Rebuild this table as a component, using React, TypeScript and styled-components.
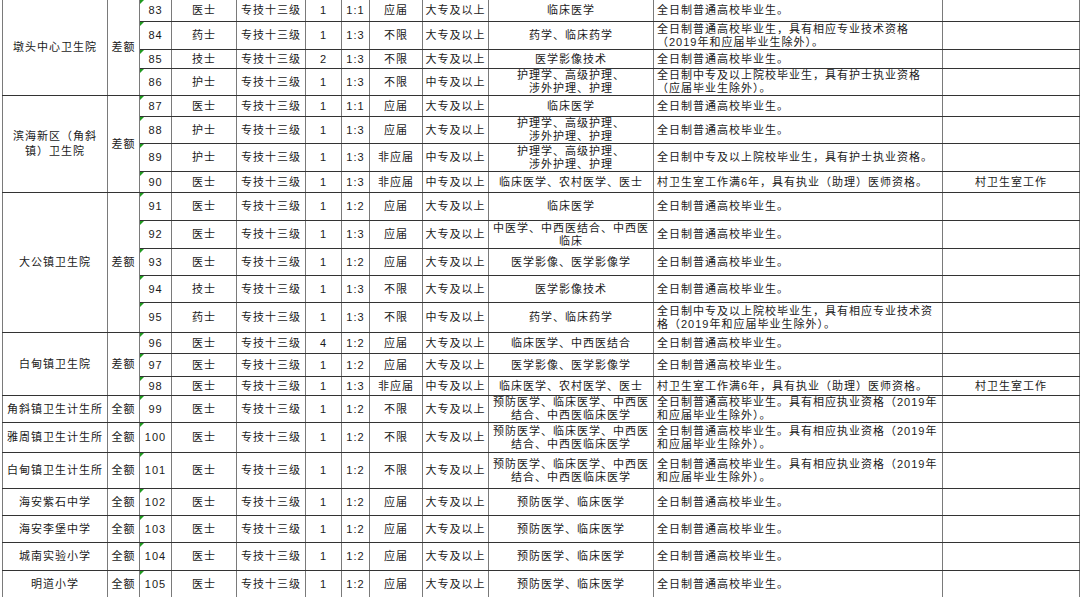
import React from 'react';
import styled, { createGlobalStyle } from 'styled-components';

const Global = createGlobalStyle`
  html, body { margin: 0; padding: 0; background: #fff; }
`;

type Row = {
  no: number;
  post: string;
  count: number;
  ratio: string;
  fresh: string;
  edu: string;
  major: string[];
  req: string[];
  note?: string;
  h: number;
};

type Group = { unit: string[]; type: string; rows: Row[] };

const G = ['全日制普通高校毕业生。'];
const CUNWEI = ['村卫生室工作满6年，具有执业（助理）医师资格。'];
const NURSE = ['护理学、高级护理、', '涉外护理、护理'];
const PREV3 = ['预防医学、临床医学、中西医', '结合、中西医临床医学'];
const REQ3 = ['全日制普通高校毕业生。具有相应执业资格（2019年', '和应届毕业生除外）。'];

const r = (
  no: number, post: string, count: number, ratio: string, fresh: string, edu: string,
  major: string[], req: string[], h: number, note?: string
): Row => ({ no, post, count, ratio, fresh, edu, major, req, h, note });

const groups: Group[] = [
  {
    unit: ['墩头中心卫生院'], type: '差额', rows: [
      r(83, '医士', 1, '1:1', '应届', '大专及以上', ['临床医学'], G, 22),
      r(84, '药士', 1, '1:3', '不限', '大专及以上', ['药学、临床药学'], ['全日制普通高校毕业生，具有相应专业技术资格', '（2019年和应届毕业生除外）。'], 28),
      r(85, '技士', 2, '1:3', '不限', '大专及以上', ['医学影像技术'], G, 19),
      r(86, '护士', 1, '1:3', '不限', '中专及以上', NURSE, ['全日制中专及以上院校毕业生，具有护士执业资格', '（应届毕业生除外）。'], 27),
    ],
  },
  {
    unit: ['滨海新区（角斜', '镇）卫生院'], type: '差额', rows: [
      r(87, '医士', 1, '1:1', '应届', '大专及以上', ['临床医学'], G, 21),
      r(88, '护士', 1, '1:3', '应届', '大专及以上', NURSE, G, 27),
      r(89, '护士', 1, '1:3', '非应届', '中专及以上', NURSE, ['全日制中专及以上院校毕业生，具有护士执业资格。'], 28),
      r(90, '医士', 1, '1:3', '非应届', '中专及以上', ['临床医学、农村医学、医士'], CUNWEI, 21, '村卫生室工作'),
    ],
  },
  {
    unit: ['大公镇卫生院'], type: '差额', rows: [
      r(91, '医士', 1, '1:2', '应届', '大专及以上', ['临床医学'], G, 28),
      r(92, '医士', 1, '1:3', '应届', '大专及以上', ['中医学、中西医结合、中西医', '临床'], G, 28),
      r(93, '医士', 1, '1:2', '应届', '大专及以上', ['医学影像、医学影像学'], G, 27),
      r(94, '技士', 1, '1:3', '不限', '大专及以上', ['医学影像技术'], G, 27),
      r(95, '药士', 1, '1:3', '不限', '中专及以上', ['药学、临床药学'], ['全日制中专及以上院校毕业生，具有相应专业技术资', '格（2019年和应届毕业生除外）。'], 30),
    ],
  },
  {
    unit: ['白甸镇卫生院'], type: '差额', rows: [
      r(96, '医士', 4, '1:2', '应届', '大专及以上', ['临床医学、中西医结合'], G, 21),
      r(97, '医士', 1, '1:2', '应届', '大专及以上', ['医学影像、医学影像学'], G, 23),
      r(98, '医士', 1, '1:3', '非应届', '中专及以上', ['临床医学、农村医学、医士'], CUNWEI, 19, '村卫生室工作'),
    ],
  },
  { unit: ['角斜镇卫生计生所'], type: '全额', rows: [r(99, '医士', 1, '1:2', '不限', '大专及以上', PREV3, REQ3, 27)] },
  { unit: ['雅周镇卫生计生所'], type: '全额', rows: [r(100, '医士', 1, '1:2', '不限', '大专及以上', PREV3, REQ3, 30)] },
  { unit: ['白甸镇卫生计生所'], type: '全额', rows: [r(101, '医士', 1, '1:2', '不限', '大专及以上', PREV3, REQ3, 36)] },
  { unit: ['海安紫石中学'], type: '全额', rows: [r(102, '医士', 1, '1:2', '应届', '大专及以上', ['预防医学、临床医学'], G, 27)] },
  { unit: ['海安李堡中学'], type: '全额', rows: [r(103, '医士', 1, '1:2', '应届', '大专及以上', ['预防医学、临床医学'], G, 27)] },
  { unit: ['城南实验小学'], type: '全额', rows: [r(104, '医士', 1, '1:2', '应届', '大专及以上', ['预防医学、临床医学'], G, 28)] },
  { unit: ['明道小学'], type: '全额', rows: [r(105, '医士', 1, '1:2', '应届', '大专及以上', ['预防医学、临床医学'], G, 27)] },
];

const colWidths = [105, 32, 32, 65, 69, 36, 28, 53, 66, 165, 289, 137];

const Sheet = styled.div`
  width: 1080px;
  height: 597px;
  overflow: hidden;
  padding-left: 2px;
  box-sizing: border-box;
  background: #fff;
`;

const Table = styled.table`
  table-layout: fixed;
  border-collapse: collapse;
  width: 1077px;
  margin-top: -1px;
  font-family: "Liberation Sans", "Noto Sans CJK SC", sans-serif;
  font-size: 11px;
  letter-spacing: 1px;
  color: #1a1a1a;
`;

const Tr = styled.tr<{ $h: number }>`
  height: ${(p) => p.$h}px;
`;

const Td = styled.td<{ $align?: 'left' | 'center'; $dark?: boolean; $lh?: number }>`
  position: relative;
  padding: 0 ${(p) => (p.$align === 'left' ? '0 0 3px' : '0')};
  text-align: ${(p) => p.$align ?? 'center'};
  vertical-align: middle;
  white-space: nowrap;
  overflow: hidden;
  line-height: ${(p) => p.$lh ?? 13}px;
  border-top: 1px solid #333;
  border-bottom: 1px solid #333;
  border-left: 1px solid ${(p) => (p.$dark ? '#000' : '#7a7a7a')};
  border-right: 1px solid #7a7a7a;
`;

const NumTd = styled(Td)`
  border-left: 1px solid #000;
  &::before {
    content: '';
    position: absolute;
    left: 0;
    top: 0;
    width: 0;
    height: 0;
    border-top: 4px solid #1f9a1f;
    border-right: 4px solid transparent;
  }
`;

const Line = styled.div`
  display: block;
`;

const Lines: React.FC<{ lines: string[] }> = ({ lines }) => (
  <>
    {lines.map((l, i) => (
      <Line key={i}>{l}</Line>
    ))}
  </>
);

export default function App() {
  return (
    <>
      <Global />
      <Sheet>
        <Table>
          <colgroup>
            {colWidths.map((w, i) => (
              <col key={i} style={{ width: w }} />
            ))}
          </colgroup>
          <tbody>
            {groups.map((g) =>
              g.rows.map((row, i) => (
                <Tr key={row.no} $h={row.h}>
                  {i === 0 && (
                    <>
                      <Td rowSpan={g.rows.length} $lh={15}>
                        <Lines lines={g.unit} />
                      </Td>
                      <Td rowSpan={g.rows.length}>{g.type}</Td>
                    </>
                  )}
                  <NumTd>{row.no}</NumTd>
                  <Td>{row.post}</Td>
                  <Td>专技十三级</Td>
                  <Td>{row.count}</Td>
                  <Td>{row.ratio}</Td>
                  <Td>{row.fresh}</Td>
                  <Td>{row.edu}</Td>
                  <Td>
                    <Lines lines={row.major} />
                  </Td>
                  <Td $align="left">
                    <Lines lines={row.req} />
                  </Td>
                  <Td>{row.note ?? ''}</Td>
                </Tr>
              ))
            )}
          </tbody>
        </Table>
      </Sheet>
    </>
  );
}
